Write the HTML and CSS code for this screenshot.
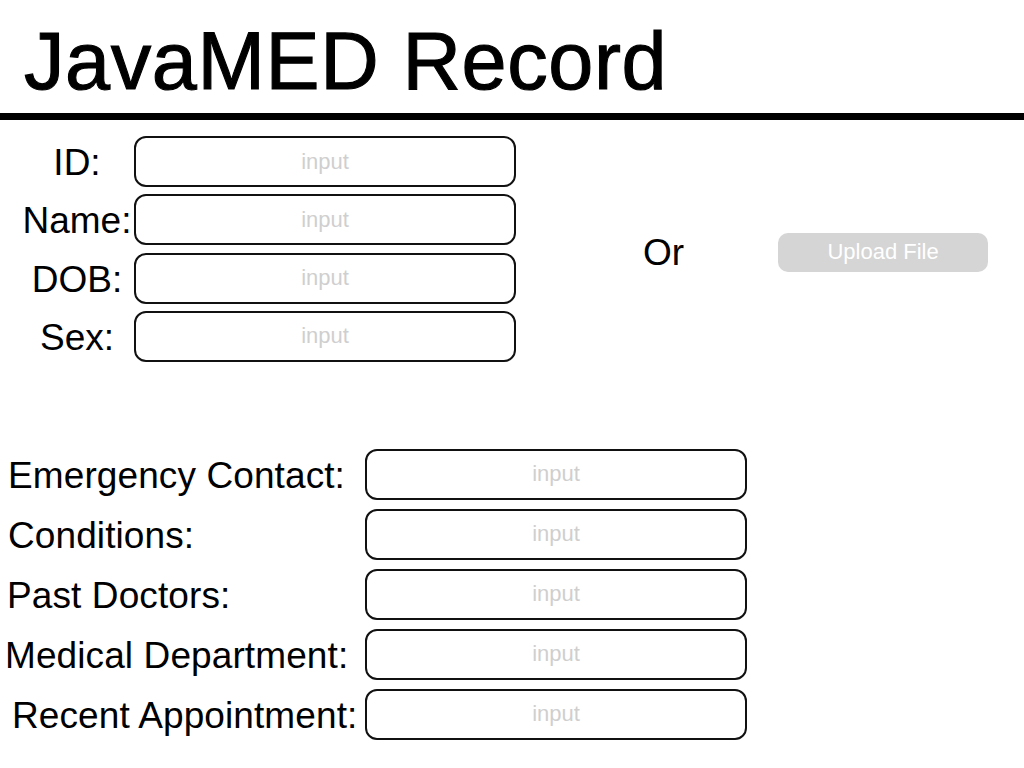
FILE: index.html
```html
<!DOCTYPE html>
<html lang="en">
<head>
<meta charset="utf-8">
<title>JavaMED Record</title>
<link rel="stylesheet" href="styles.css">
</head>
<body>
  <header class="masthead">
    <h1 class="title">JavaMED Record</h1>
  </header>

  <main class="page">
    <section class="identity">
      <div class="identity-form">
        <div class="id-row">
          <label class="id-label" for="f-id">ID:</label>
          <input class="field" id="f-id" type="text" placeholder="input">
        </div>
        <div class="id-row">
          <label class="id-label" for="f-name">Name:</label>
          <input class="field" id="f-name" type="text" placeholder="input">
        </div>
        <div class="id-row">
          <label class="id-label" for="f-dob">DOB:</label>
          <input class="field" id="f-dob" type="text" placeholder="input">
        </div>
        <div class="id-row">
          <label class="id-label" for="f-sex">Sex:</label>
          <input class="field" id="f-sex" type="text" placeholder="input">
        </div>
      </div>
      <span class="or">Or</span>
      <button class="upload" type="button">Upload File</button>
    </section>

    <section class="details">
      <div class="detail-row">
        <label class="detail-label" for="f-em">Emergency Contact:</label>
        <input class="field" id="f-em" type="text" placeholder="input">
      </div>
      <div class="detail-row">
        <label class="detail-label" for="f-cond">Conditions:</label>
        <input class="field" id="f-cond" type="text" placeholder="input">
      </div>
      <div class="detail-row">
        <label class="detail-label detail-label--tight" for="f-doc">Past Doctors:</label>
        <input class="field" id="f-doc" type="text" placeholder="input">
      </div>
      <div class="detail-row">
        <label class="detail-label detail-label--out" for="f-dept">Medical Department:</label>
        <input class="field" id="f-dept" type="text" placeholder="input">
      </div>
      <div class="detail-row">
        <label class="detail-label detail-label--in" for="f-appt">Recent Appointment:</label>
        <input class="field" id="f-appt" type="text" placeholder="input">
      </div>
    </section>
  </main>
</body>
</html>
```

FILE: styles.css
```css
html, body {
  margin: 0;
  padding: 0;
  background: #ffffff;
}

body {
  font-family: "Liberation Sans", Arial, Helvetica, sans-serif;
  color: #000;
  width: 1024px;
  height: 768px;
  overflow: hidden;
}

.masthead {
  padding: 21px 0 11px 24px;
  border-bottom: 7px solid #000;
}

.title {
  margin: 0;
  font-size: 81px;
  line-height: 81px;
  font-weight: 400;
  letter-spacing: 0.6px;
  -webkit-text-stroke: 1.1px #000;
}

.page {
  display: flex;
  flex-direction: column;
}

/* top identity block */
.identity {
  display: flex;
  align-items: center;
  padding: 16px 0 0 20px;
}

.identity-form {
  display: flex;
  flex-direction: column;
  gap: 7.3px;
}

.id-row {
  display: flex;
  align-items: center;
}

.id-label {
  width: 114px;
  text-align: center;
  font-size: 37px;
  padding-top: 3px;
  white-space: nowrap;
}

.field {
  box-sizing: border-box;
  width: 382px;
  height: 51px;
  margin: 0;
  padding: 0 10px;
  border: 2px solid #111;
  border-radius: 12px;
  background: #fff;
  font-family: "Liberation Sans", Arial, Helvetica, sans-serif;
  font-size: 22px;
  text-align: center;
  color: #000;
  outline: none;
}

.field::placeholder {
  color: #cfcfcf;
  opacity: 1;
}

.or {
  margin-left: 127px;
  margin-top: 8px;
  font-size: 37px;
  line-height: 43px;
}

.upload {
  margin-left: 94px;
  margin-top: 7px;
  width: 210px;
  height: 39px;
  border: none;
  border-radius: 10px;
  background: #d5d5d5;
  color: #fff;
  font-family: "Liberation Sans", Arial, Helvetica, sans-serif;
  font-size: 22px;
  padding: 0;
}

/* bottom details block */
.details {
  display: flex;
  flex-direction: column;
  gap: 9px;
  margin-top: 87px;
}

.detail-row {
  display: flex;
  align-items: center;
}

.detail-label {
  box-sizing: border-box;
  width: 365px;
  padding-left: 8px;
  padding-top: 3px;
  font-size: 37px;
  letter-spacing: 0.1px;
  white-space: nowrap;
}

.detail-label--tight {
  padding-left: 7px;
}

.detail-label--out {
  padding-left: 5px;
}

.detail-label--in {
  padding-left: 12px;
}
```
